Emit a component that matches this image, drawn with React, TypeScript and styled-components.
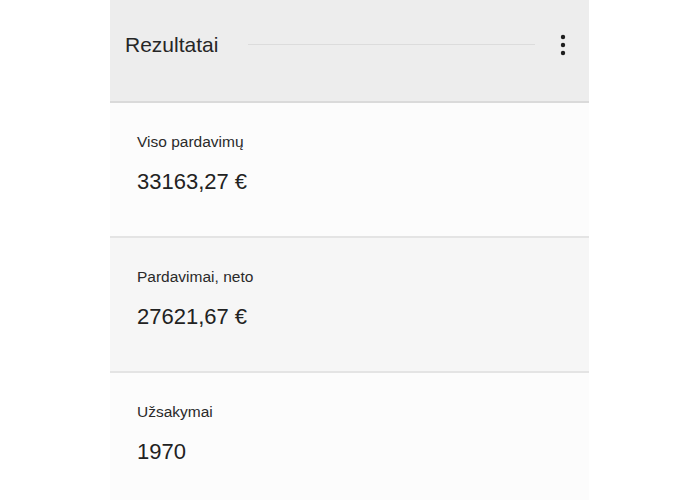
import React from "react";
import styled, { createGlobalStyle } from "styled-components";

const Global = createGlobalStyle`
  html, body { margin: 0; padding: 0; background: #ffffff; }
  body { font-family: "Liberation Sans", Arial, sans-serif; color: #222; }
`;

const Page = styled.div`
  width: 479px;
  margin-left: 110px;
  display: flex;
  flex-direction: column;
`;

const Header = styled.header`
  height: 103px;
  box-sizing: border-box;
  background: #ededed;
  border-bottom: 2px solid #dadada;
  display: flex;
  align-items: center;
  padding: 0 22px 12px 15px;
`;

const Title = styled.h1`
  margin: 0 30px 0 0;
  font-size: 21px;
  font-weight: 400;
  color: #262626;
  line-height: 1;
`;

const Rule = styled.div`
  flex: 1;
  height: 1px;
  background: #dcdcdc;
  margin-right: 24px;
`;

const MenuButton = styled.button`
  border: 0;
  background: none;
  padding: 0;
  width: 8px;
  height: 22px;
  display: flex;
  align-items: center;
  justify-content: center;
  cursor: pointer;
`;

const Card = styled.section<{ $shade: boolean }>`
  height: 135px;
  box-sizing: border-box;
  background: ${(p) => (p.$shade ? "#f6f6f6" : "#fcfcfc")};
  border-bottom: 2px solid #e4e4e4;
  padding: 29px 27px 0;
  display: flex;
  flex-direction: column;
  gap: 16px;
`;

const Label = styled.div`
  font-size: 15.5px;
  line-height: 20px;
  color: #2a2a2a;
`;

const Value = styled.div`
  font-size: 22px;
  line-height: 28px;
  color: #222;
`;

const items = [
  { label: "Viso pardavimų", value: "33163,27 €" },
  { label: "Pardavimai, neto", value: "27621,67 €" },
  { label: "Užsakymai", value: "1970" },
];

export default function App() {
  return (
    <>
      <Global />
      <Page>
        <Header>
          <Title>Rezultatai</Title>
          <Rule />
          <MenuButton aria-label="Meniu">
            <svg width="6" height="22" viewBox="0 0 6 22">
              <circle cx="3" cy="3" r="2.2" fill="#1e1e1e" />
              <circle cx="3" cy="11" r="2.2" fill="#1e1e1e" />
              <circle cx="3" cy="19" r="2.2" fill="#1e1e1e" />
            </svg>
          </MenuButton>
        </Header>
        {items.map((it, i) => (
          <Card key={it.label} $shade={i === 1}>
            <Label>{it.label}</Label>
            <Value>{it.value}</Value>
          </Card>
        ))}
      </Page>
    </>
  );
}
